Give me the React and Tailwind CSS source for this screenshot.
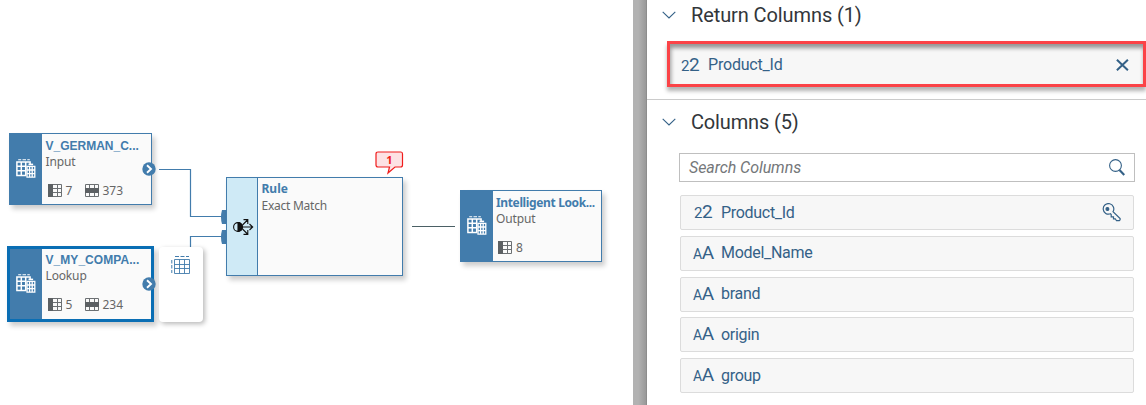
import React from 'react';

const BuildingIcon = () => (
  <svg width="20" height="20" viewBox="0 0 20 20" fill="none" stroke="#fff">
    <path d="M2.2 .8h3M6.500 .8h3.500M11.300 .8h2.500" strokeWidth="1.1" />
    <path d="M.9 16.800V2.900h13.200v2M.2 16.500h10M.9 7.200h9.500M.9 11.800h9.500M5.300 2.900v13.700M9.700 2.900v13.700" strokeWidth="1.500" />
    <path d="M12.500 5.400h4.600" strokeWidth="1.600" />
    <path d="M11 7.400h7.800v10.800H11zM11 11h7.800M11 14.600h7.800M13.600 7.400v10.800M16.200 7.400v10.800" strokeWidth="1.300" />
  </svg>
);

const ColumnsIcon = () => (
  <svg width="14" height="13" viewBox="0 0 14 13" fill="none" stroke="#6c7073">
    <path d="M.5 .5h13v12H.5zM4.500 4.500h9M4.500 8.500h9M9.500 .5v12" />
    <path d="M0 0h5v13H0z" fill="#5c6063" stroke="none" />
  </svg>
);

const RowsIcon = () => (
  <svg width="14" height="13" viewBox="0 0 14 13" fill="none" stroke="#6c7073">
    <path d="M.5 .5h13v12H.5zM4.500 .5v12M9.500 .5v12" />
    <path d="M0 4h14v5H0z" fill="#5c6063" stroke="none" />
  </svg>
);

const Chevron = () => (
  <svg className="shrink-0" width="14" height="8" viewBox="0 0 14 8" fill="none" stroke="#346187" strokeWidth="1.1">
    <path d="M.7 .8L7 7l6.3-6.2" />
  </svg>
);

const Node = ({ place, pad, title, titleClass, kind, cols, rows }) => (
  <div className={`absolute flex bg-[#fafafa] shadow-[3px_4px_5px_rgba(0,0,0,0.2)] ${place}`}>
    <div className="flex w-8 shrink-0 items-center justify-center bg-[#427cac]">
      <BuildingIcon />
    </div>
    <div className={`flex flex-col ${pad}`}>
      <div className={`h-4 whitespace-nowrap text-[12px] leading-4 font-bold text-[#427cac] ${titleClass}`}>{title}</div>
      <div className="h-4 text-[12px] leading-4 tracking-[-0.15px] text-[#666]">{kind}</div>
      <div className="mt-[13px] flex h-[14px] items-center text-[12px] leading-[14px] text-[#666]">
        <span className="ml-[2px]"><ColumnsIcon /></span>
        <span className="ml-1 w-[19px] translate-y-px">{cols}</span>
        {rows && <RowsIcon />}
        {rows && <span className="ml-1 translate-y-px">{rows}</span>}
      </div>
    </div>
  </div>
);

const Port = ({ place }) => (
  <svg className={`absolute ${place}`} width="14" height="14" viewBox="0 0 14 14">
    <circle cx="7" cy="7" r="6.7" fill="#427cac" />
    <path d="M5 3.300L9 7l-4 3.700" fill="none" stroke="#fff" strokeWidth="1.900" />
  </svg>
);

const TypeIcon = ({ char }) => (
  <span className={`flex w-5 shrink-0 items-baseline tracking-[-0.5px] text-[#346187] ${char === '2' ? 'ml-px' : ''}`}>
    <span className={char === '2' ? 'text-[15px] leading-5' : 'text-[14px] leading-5'}>{char}</span>
    <span className="text-[19px] leading-5">{char}</span>
  </span>
);

const KeyIcon = () => (
  <svg width="19" height="19" viewBox="0 0 19 19" fill="none" stroke="#346187" strokeWidth="1.2">
    <path d="M11 8.700A5.300 5.300 0 1 0 8.500 10.800l.7 .8v2.200h2.300v2h1.800l1.200 1.900h2.800l.8-.9v-1.200z" />
    <circle cx="5.400" cy="6" r="1.400" fill="#346187" />
  </svg>
);

const columns = [
  { name: 'Product_Id', char: '2', isKey: true },
  { name: 'Model_Name', char: 'A' },
  { name: 'brand', char: 'A' },
  { name: 'origin', char: 'A' },
  { name: 'group', char: 'A' },
];

export default function App() {
  return (
    <div className="flex h-[405px] w-[1146px] overflow-hidden bg-white font-['Roboto',sans-serif]">
      <main className="relative w-[633px] shrink-0 font-['Noto_Sans',sans-serif]">
        <svg className="absolute inset-0" width="633" height="405" fill="none">
          <path d="M159 169.5h31.5v47H222M190.5 250v-13.500H222" stroke="#427cac" strokeWidth="1.2" />
          <path d="M412 226.500h43" stroke="#4b6065" strokeWidth="1" />
          <path d="M222 210h5v14h-5q-2-7 0-14zM222 230h5v14h-5q-2-7 0-14z" fill="#427cac" />
        </svg>
        <Node
          place="left-[9px] top-[133px] h-[72px] w-[143px] border border-[#427cac]"
          pad="pl-[3.5px] pt-1"
          title="V_GERMAN_C..."
          titleClass="font-['Liberation_Sans',sans-serif]"
          kind="Input"
          cols="7"
          rows="373"
        />
        <Port place="left-[142px] top-[162px]" />
        <Node
          place="left-[7px] top-[246px] h-[76px] w-[147px] border-3 border-[#0a6eb4]"
          pad="pl-[3.5px] pt-[3px]"
          title="V_MY_COMPA..."
          titleClass="font-['Liberation_Sans',sans-serif] tracking-[0.05px]"
          kind="Lookup"
          cols="5"
          rows="234"
        />
        <Port place="left-[142px] top-[277px]" />
        <div className="absolute left-[159px] top-[247px] flex h-[75px] w-[44px] justify-center rounded bg-white pt-2 pr-[2px] shadow-[2px_2px_5px_rgba(0,0,0,0.28)]">
          <svg width="19" height="20" viewBox="0 0 19 20" fill="none" stroke="#427cac">
            <path d="M3.500 4.500h15v14h-15zM3.500 9.500h15M3.500 13.500h15M8.500 4.500v14M13.500 4.500v14" strokeWidth=".9" />
            <path d="M4 1.500h4M9.500 1.500h4M15 1.500h3M.8 5v3.500M.8 10v3.500M.8 15v3" />
          </svg>
        </div>
        <div className="absolute left-[226px] top-[177px] flex h-[99px] w-[177px] border border-[#427cac] bg-[#fafafa] shadow-[3px_4px_5px_rgba(0,0,0,0.2)]">
          <div className="flex w-[31px] shrink-0 items-center justify-center border-r border-[#427cac] bg-[#cfeaf6] pl-[2px]">
            <svg width="21" height="18" viewBox="0 0 21 18" fill="none" stroke="#111" strokeWidth="1.1">
              <circle cx="5" cy="9" r="4.400" />
              <path d="M5 4.600a4.400 4.400 0 0 1 0 8.800z" fill="#111" />
              <path d="M9 9h10.500M16.500 6l3.200 3-3.200 3M9.500 7l5-5M10.500 1.600h4.300v4.300M9.500 11l5 5M10.500 16.400h4.300v-4.300" />
            </svg>
          </div>
          <div className="pl-[3.5px] pt-[3px] text-[12px]">
            <div className="h-4 leading-4 font-bold text-[#427cac]">Rule</div>
            <div className="mt-px h-4 leading-4 tracking-[-0.25px] text-[#666]">Exact Match</div>
          </div>
        </div>
        <div className="absolute left-[375px] top-[151px] h-[24px] w-[29px] text-center text-[11px] leading-[17px] font-bold text-[#f01c1c]">
          <svg className="absolute inset-0" width="29" height="24" fill="#fde2e4" stroke="#f01c1c" strokeWidth="1.2">
            <path d="M3 1h23q1.500 0 1.500 2v11q0 2-2 2H20l-7 6 1.500-6H3q-2 0-2-2V3q0-2 2-2z" />
          </svg>
          <span className="relative">1</span>
        </div>
        <Node
          place="left-[460px] top-[190px] h-[72px] w-[142px] border border-[#427cac]"
          pad="pl-[3px] pt-1"
          title="Intelligent Look..."
          titleClass="tracking-[-0.36px]"
          kind="Output"
          cols="8"
        />
      </main>

      <div className="w-[14px] shrink-0 border-r border-[#8d8d8d] bg-linear-to-r from-[#b2b2b2] from-40% to-[#999]" />

      <aside className="flex w-[499px] shrink-0 flex-col">
        <div className="flex h-[100px] flex-col border-b border-[#cbcbcb]">
          <h2 className="flex h-[30px] shrink-0 items-center gap-[15px] pl-[15px] text-[20px] tracking-[-0.1px] text-[#32363a]">
            <Chevron />
            <span className="whitespace-nowrap">Return Columns (1)</span>
          </h2>
          <div className="mt-[11px] ml-5 flex h-[46px] w-[479px] shrink-0 items-center border-3 border-[#fb4347] bg-[#f7f7f7] pt-[2px] pr-[14px] pl-[10px] text-[16px] tracking-[-0.2px] text-[#346187] shadow-[0_4px_4px_rgba(0,0,0,0.3),inset_1px_4px_4px_rgba(0,0,0,0.4)]">
            <TypeIcon char="2" />
            <span className="ml-[7px]">Product_Id</span>
            <svg className="ml-auto" width="13" height="12" viewBox="0 0 13 12" stroke="#346187" strokeWidth="2">
              <path d="M.9 .7l11 10.600M11.900 .7L.9 11.300" />
            </svg>
          </div>
        </div>
        <h2 className="mt-[7px] flex h-[30px] shrink-0 items-center gap-[15px] pl-[15px] text-[20px] tracking-[-0.15px] text-[#32363a]">
          <Chevron />
          <span className="whitespace-nowrap">Columns (5)</span>
        </h2>
        <div className="mt-4 ml-8 flex h-[29px] w-[456px] shrink-0 items-center justify-between border border-[#bfbfbf] pr-[9px] pl-[9px] text-[16px] tracking-[-0.07px] text-[#74777a]">
          <span className="italic">Search Columns</span>
          <svg width="16" height="17" viewBox="0 0 16 17" fill="none" stroke="#346187">
            <circle cx="6.500" cy="6.500" r="5.900" strokeWidth="1.100" />
            <path d="M10.500 11l4.800 5" strokeWidth="2.200" />
          </svg>
        </div>
        <div className="mt-[13px] ml-[33px] flex h-[198px] w-[454px] shrink-0 flex-col justify-between">
          {columns.map((c) => (
            <div key={c.name} className="flex h-[35px] items-center rounded-[2px] border border-[#dcdcdc] bg-[#f7f7f7] pr-3 pl-3 text-[16px] tracking-[-0.3px] text-[#346187]">
              <TypeIcon char={c.char} />
              <span className={c.isKey ? 'ml-[7px]' : 'ml-2'}>{c.name}</span>
              {c.isKey && <span className="ml-auto"><KeyIcon /></span>}
            </div>
          ))}
        </div>
      </aside>
    </div>
  );
}
